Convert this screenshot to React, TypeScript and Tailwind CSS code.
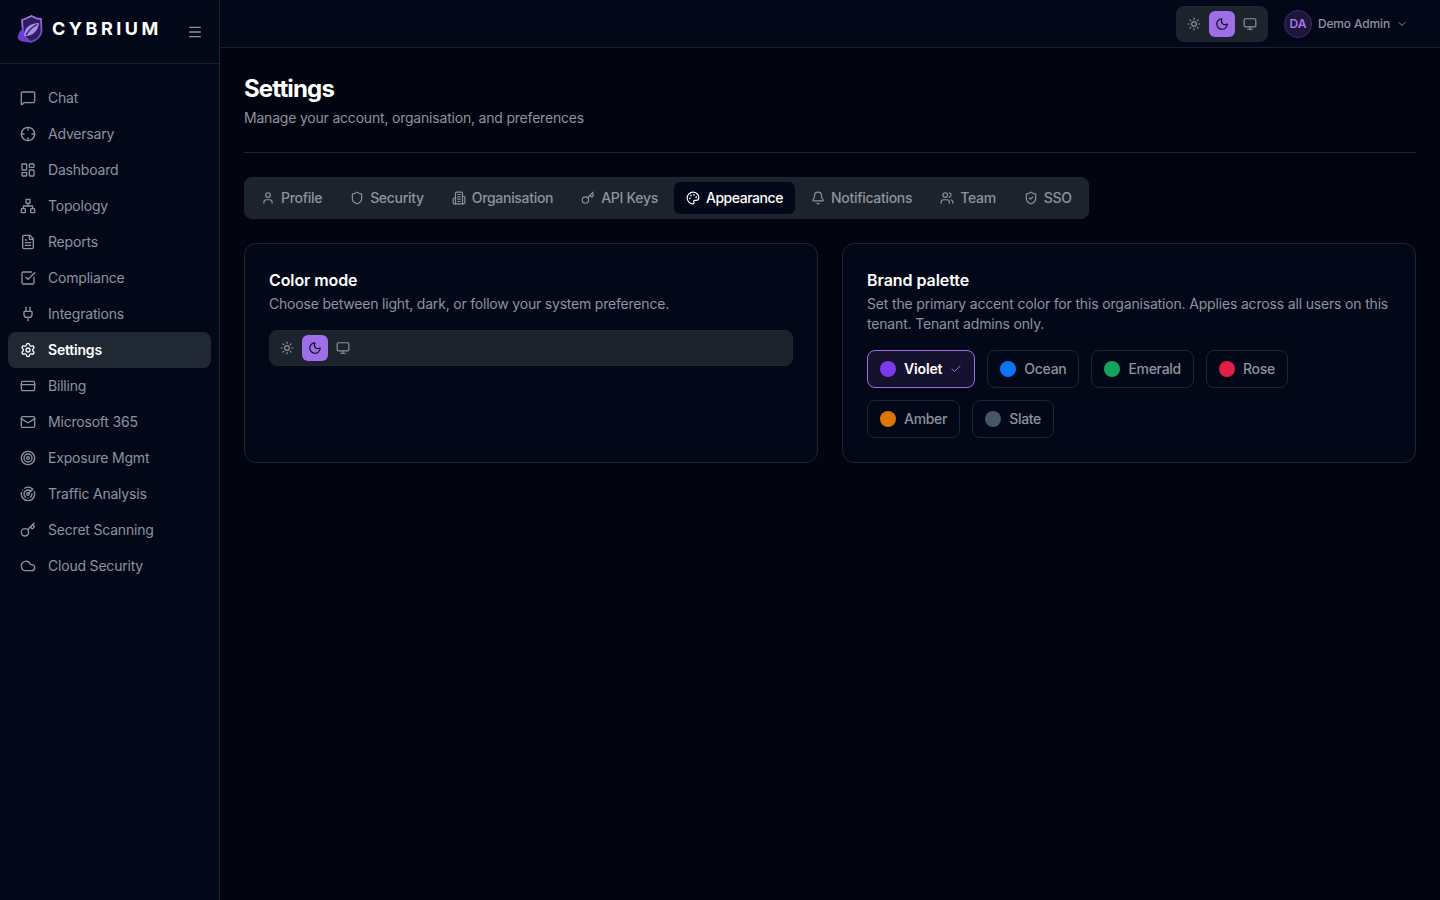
import React from "react";
import {
  Check,
  ChevronDown,
  Cloud,
  CreditCard,
  Crosshair,
  FileText,
  Key,
  LayoutDashboard,
  Bell,
  Mail,
  Menu,
  MessageSquare,
  Monitor,
  Moon,
  Network,
  Palette,
  Plug,
  Radar,
  Settings,
  Shield,
  ShieldCheck,
  SquareCheckBig,
  Sun,
  Target,
  User,
  Users,
} from "lucide-react";

const OrgIcon = ({ size = 14 }: { size?: number }) => (
  <svg
    width={size}
    height={size}
    viewBox="0 0 24 24"
    fill="none"
    stroke="currentColor"
    strokeWidth="2"
    strokeLinecap="round"
    strokeLinejoin="round"
  >
    <path d="M6 22V4a2 2 0 0 1 2-2h8a2 2 0 0 1 2 2v18Z" />
    <path d="M6 12H4a2 2 0 0 0-2 2v6a2 2 0 0 0 2 2h2" />
    <path d="M18 9h2a2 2 0 0 1 2 2v9a2 2 0 0 1-2 2h-2" />
    <path d="M10 6h4" />
    <path d="M10 10h4" />
    <path d="M10 14h4" />
    <path d="M10 18h4" />
  </svg>
);

const nav = [
  { label: "Chat", icon: MessageSquare },
  { label: "Adversary", icon: Crosshair },
  { label: "Dashboard", icon: LayoutDashboard },
  { label: "Topology", icon: Network },
  { label: "Reports", icon: FileText },
  { label: "Compliance", icon: SquareCheckBig },
  { label: "Integrations", icon: Plug },
  { label: "Settings", icon: Settings, active: true },
  { label: "Billing", icon: CreditCard },
  { label: "Microsoft 365", icon: Mail },
  { label: "Exposure Mgmt", icon: Target },
  { label: "Traffic Analysis", icon: Radar },
  { label: "Secret Scanning", icon: Key },
  { label: "Cloud Security", icon: Cloud },
];

const tabs = [
  { label: "Profile", icon: User },
  { label: "Security", icon: Shield },
  { label: "Organisation", icon: OrgIcon },
  { label: "API Keys", icon: Key },
  { label: "Appearance", icon: Palette, active: true },
  { label: "Notifications", icon: Bell },
  { label: "Team", icon: Users },
  { label: "SSO", icon: ShieldCheck },
];

const palettes = [
  { label: "Violet", dot: "bg-[#7c3aed]", active: true },
  { label: "Ocean", dot: "bg-[#0b76f5]" },
  { label: "Emerald", dot: "bg-[#14a35f]" },
  { label: "Rose", dot: "bg-[#e11d48]" },
  { label: "Amber", dot: "bg-[#d97706]" },
  { label: "Slate", dot: "bg-[#475569]" },
];

const Logo = () => (
  <svg width="28" height="30" viewBox="0 0 28 30" fill="none" className="-mt-[6px] shrink-0">
    <defs>
      <linearGradient id="lg" x1="8" y1="2" x2="22" y2="28" gradientUnits="userSpaceOnUse">
        <stop offset="0" stopColor="#a080e6" />
        <stop offset="1" stopColor="#6d3fd0" />
      </linearGradient>
    </defs>
    <path
      d="M15.5 2 L21 4.5 L25 5 L25.5 17 C25 22 21 26 15 28 C11 26 8 23 7 18 L6 6 L10 4.5 Z"
      stroke="url(#lg)"
      strokeWidth="1.8"
      fill="#2e1d5c"
    />
    <path d="M8 13 C3 17 0 24 3 26 C6 28 11 28 16 28.5 C10 26 7 20 8 13 Z" fill="#6d3fd0" />
    <path d="M8 22 C8 14 14 9 23 9 C22 17 16 23 8 22 Z" fill="#a98cf0" />
    <path d="M10 21 C13 16 16 13 21 10.5" stroke="#1d1240" strokeWidth="1.3" />
  </svg>
);

const ThemeToggle = ({ full }: { full?: boolean }) => (
  <div className={`flex h-9 items-center gap-0.5 rounded-lg border border-[#1f2631] bg-[#1c232d] px-[4px] ${full ? "w-full" : ""}`}>
    <button className="flex h-[26px] w-[26px] items-center justify-center rounded-md text-[#8d939e]">
      <Sun size={14} />
    </button>
    <button className="flex h-[26px] w-[26px] items-center justify-center rounded-md bg-[#9e6ee8] text-[#0a0a1e]">
      <Moon size={14} />
    </button>
    <button className="flex h-[26px] w-[26px] items-center justify-center rounded-md text-[#8d939e]">
      <Monitor size={14} />
    </button>
  </div>
);

export default function App() {
  return (
    <div className="flex h-screen w-full overflow-hidden bg-[#020410] text-white font-['Inter',sans-serif]">
      <aside className="flex w-[220px] shrink-0 flex-col border-r border-[#1b212c] bg-[#030818]">
        <div className="flex h-16 items-center border-b border-[#1b212c] pl-4 pr-4">
          <Logo />
          <span className="ml-2 -mt-[6px] text-[18px] font-bold leading-none tracking-[3.5px] text-white">
            CYBRIUM
          </span>
          <Menu size={16} className="ml-auto text-[#8d939e]" />
        </div>
        <nav className="flex flex-col px-2 pt-4">
          {nav.map((item) => {
            const Icon = item.icon;
            return (
              <a
                key={item.label}
                className={`flex h-9 items-center gap-3 rounded-lg px-3 text-sm tracking-[-0.2px] ${
                  item.active ? "bg-[#202834] font-semibold text-white" : "text-[#8d939e]"
                }`}
              >
                <Icon size={16} className="shrink-0" />
                {item.label}
              </a>
            );
          })}
        </nav>
      </aside>

      <div className="flex min-w-0 flex-1 flex-col">
        <header className="flex h-12 items-center justify-end border-b border-[#1b212c] bg-[#030818] pr-8">
          <ThemeToggle />
          <div className="ml-4 flex items-center gap-1.5">
            <span className="flex h-7 w-7 items-center justify-center rounded-full border border-[#3f2d6e] bg-[#1d1638] text-xs font-semibold text-[#a678f0]">
              DA
            </span>
            <span className="text-xs font-medium tracking-[-0.15px] text-[#8d939e]">Demo Admin</span>
            <ChevronDown size={12} className="text-[#8d939e]" />
          </div>
        </header>

        <main className="flex-1 p-6">
          <div className="border-b border-[#1f2530] pb-6">
            <h1 className="pt-px text-2xl font-bold leading-8 tracking-[-0.85px] text-white">Settings</h1>
            <p className="text-sm leading-5 tracking-[-0.2px] mt-[3px] text-[#8d939e]">Manage your account, organisation, and preferences</p>
          </div>

          <div className="mt-6 inline-flex gap-1 rounded-lg border border-[#1f2631] bg-[#1c232d] p-1">
            {tabs.map((tab) => {
              const Icon = tab.icon;
              return (
                <button
                  key={tab.label}
                  className={`flex h-8 items-center gap-1.5 rounded-md px-3 text-sm font-medium ${
                    tab.active ? "bg-[#030818] tracking-[-0.45px] text-white" : "tracking-[-0.3px] text-[#8d939e]"
                  }`}
                >
                  <Icon size={14} />
                  {tab.label}
                </button>
              );
            })}
          </div>

          <div className="mt-6 grid grid-cols-2 gap-6">
            <section className="h-[220px] rounded-xl border border-[#1f2530] bg-[#030818] p-6">
              <h2 className="mb-0.5 text-base font-semibold leading-6 tracking-[-0.1px] text-white">Color mode</h2>
              <p className="text-sm leading-5 tracking-[-0.2px] text-[#8d939e]">Choose between light, dark, or follow your system preference.</p>
              <div className="mt-4">
                <ThemeToggle full />
              </div>
            </section>

            <section className="h-[220px] rounded-xl border border-[#1f2530] bg-[#030818] p-6">
              <h2 className="mb-0.5 text-base font-semibold leading-6 tracking-[-0.05px] text-white">Brand palette</h2>
              <p className="text-sm leading-5 tracking-[-0.17px] text-[#8d939e]">
                Set the primary accent color for this organisation. Applies across all users on this tenant. Tenant admins only.
              </p>
              <div className="mt-4 flex flex-wrap gap-3">
                {palettes.map((p) => (
                  <button
                    key={p.label}
                    className={`flex h-[38px] items-center gap-2 rounded-lg border px-3 text-sm ${
                      p.active
                        ? "border-[#9e6ee8] bg-[#15122e] font-semibold tracking-[-0.15px] text-white"
                        : "border-[#1f2530] font-medium tracking-[-0.3px] text-[#8d939e]"
                    }`}
                  >
                    <span className={`h-4 w-4 rounded-full ${p.dot}`} />
                    {p.label}
                    {p.active && <Check size={12} className="text-[#9e6ee8]" />}
                  </button>
                ))}
              </div>
            </section>
          </div>
        </main>
      </div>
    </div>
  );
}
